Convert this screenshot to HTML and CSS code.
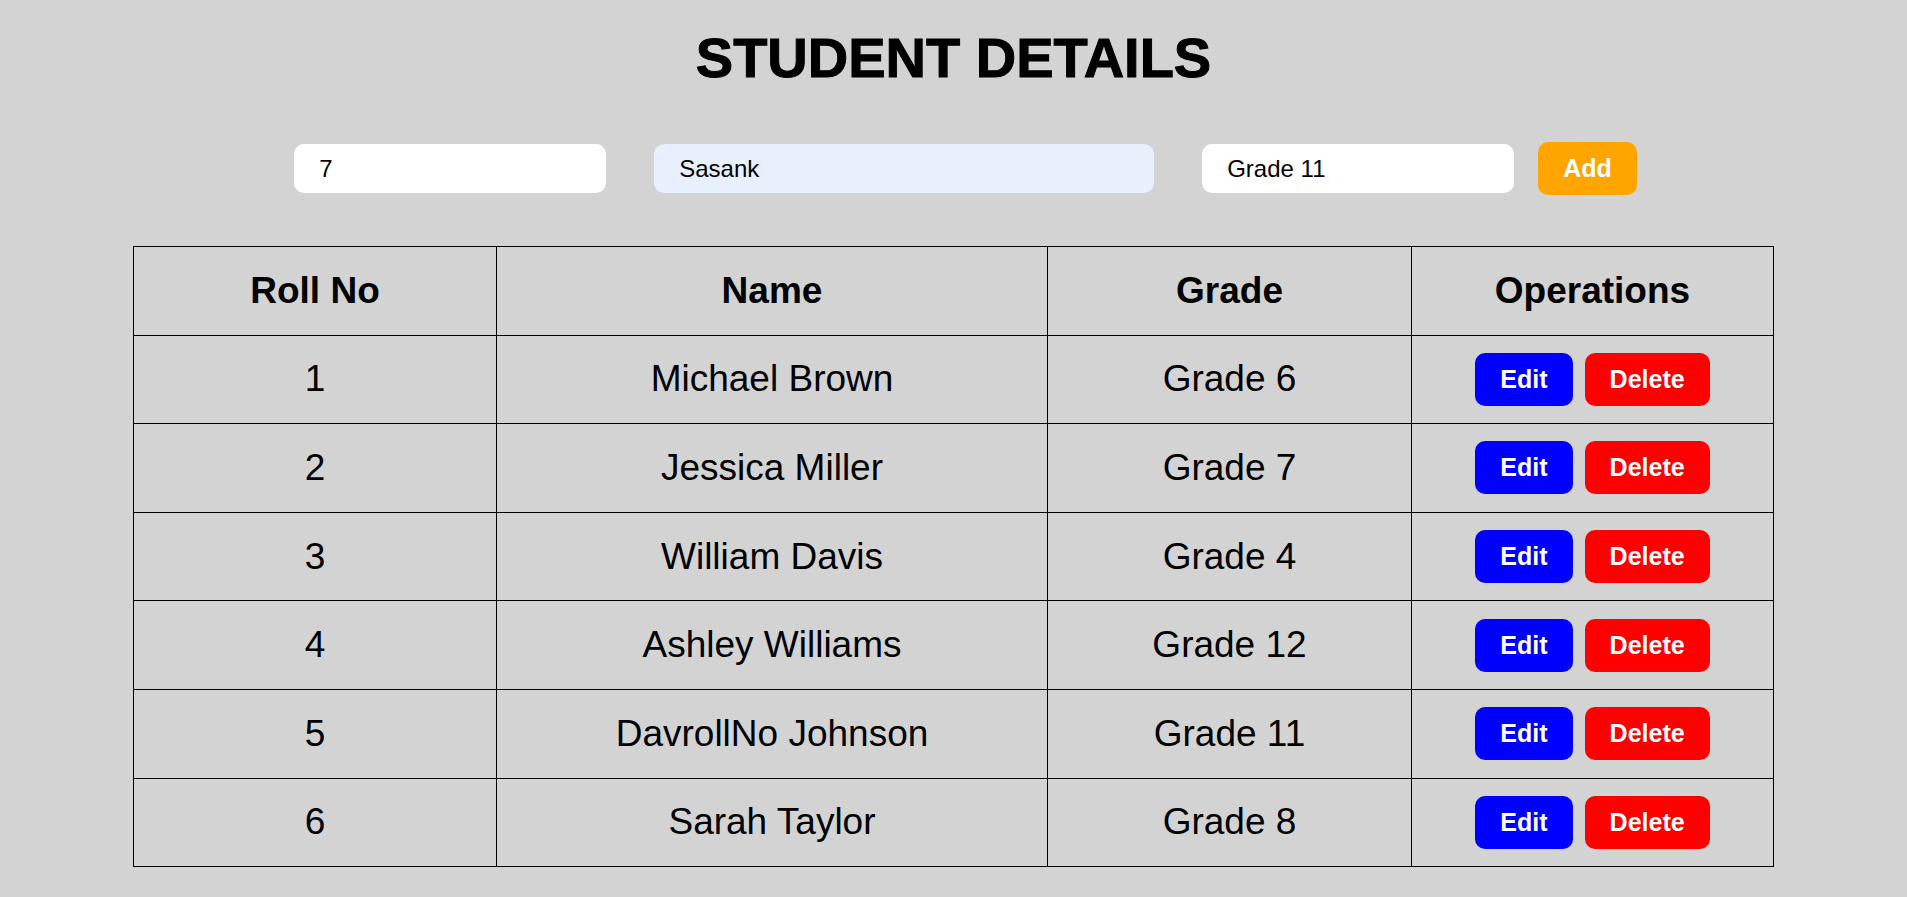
FILE: index.html
```html
<!DOCTYPE html>
<html lang="en">
<head>
<meta charset="UTF-8">
<title>Student Details</title>
<link rel="stylesheet" href="styles.css">
</head>
<body>
  <h1 class="title">STUDENT DETAILS</h1>
  <div class="form">
    <input class="field field-roll" type="text" value="7">
    <input class="field field-name autofilled" type="text" value="Sasank">
    <input class="field field-grade" type="text" value="Grade 11">
    <button class="btn btn-add">Add</button>
  </div>
  <table class="students">
    <colgroup>
      <col class="c1"><col class="c2"><col class="c3"><col class="c4">
    </colgroup>
    <thead>
      <tr><th>Roll No</th><th>Name</th><th>Grade</th><th>Operations</th></tr>
    </thead>
    <tbody>
      <tr><td>1</td><td>Michael Brown</td><td>Grade 6</td><td><div class="ops"><button class="btn btn-edit">Edit</button><button class="btn btn-delete">Delete</button></div></td></tr>
      <tr><td>2</td><td>Jessica Miller</td><td>Grade 7</td><td><div class="ops"><button class="btn btn-edit">Edit</button><button class="btn btn-delete">Delete</button></div></td></tr>
      <tr><td>3</td><td>William Davis</td><td>Grade 4</td><td><div class="ops"><button class="btn btn-edit">Edit</button><button class="btn btn-delete">Delete</button></div></td></tr>
      <tr><td>4</td><td>Ashley Williams</td><td>Grade 12</td><td><div class="ops"><button class="btn btn-edit">Edit</button><button class="btn btn-delete">Delete</button></div></td></tr>
      <tr><td>5</td><td>DavrollNo Johnson</td><td>Grade 11</td><td><div class="ops"><button class="btn btn-edit">Edit</button><button class="btn btn-delete">Delete</button></div></td></tr>
      <tr><td>6</td><td>Sarah Taylor</td><td>Grade 8</td><td><div class="ops"><button class="btn btn-edit">Edit</button><button class="btn btn-delete">Delete</button></div></td></tr>
    </tbody>
  </table>
</body>
</html>
```
FILE: styles.css
```css
html, body {
  margin: 0;
  padding: 0;
  background: #d3d3d3;
  font-family: "Liberation Sans", Arial, sans-serif;
  color: #000;
}

.title {
  margin: 25px 0 0;
  text-align: center;
  font-size: 56px;
  font-weight: 900;
  line-height: normal;
  -webkit-text-stroke: 1px #000;
}

.form {
  display: flex;
  justify-content: center;
  align-items: center;
  margin-top: 52px;
}

.field {
  box-sizing: border-box;
  height: 49px;
  margin: 0 24px;
  padding: 0 25px;
  border: none;
  border-radius: 10px;
  background: #fff;
  font-family: "Liberation Sans", Arial, sans-serif;
  font-size: 24px;
  color: #000;
  outline: none;
}

.field-roll, .field-grade { width: 312px; }
.field-name { width: 500px; }
.autofilled { background: #e8f0fe; }

.btn {
  border: none;
  border-radius: 10px;
  padding: 12px 25px;
  font-family: "Liberation Sans", Arial, sans-serif;
  font-size: 25px;
  font-weight: bold;
  color: #fff;
  line-height: normal;
  cursor: pointer;
}

.btn-add { background: #ffa500; height: 53px; }
.btn-edit { background: #0000ff; }
.btn-delete { background: #ff0000; }

.students {
  width: 1640px;
  margin: 51px auto 0;
  border-collapse: collapse;
  font-size: 37px;
  table-layout: fixed;
}

.c1 { width: 363px; }
.c2 { width: 551px; }
.c3 { width: 364px; }
.c4 { width: 362px; }

.students th,
.students td {
  border: 1px solid #000;
  text-align: center;
  padding: 0;
  height: 87.6px;
}

.students th { font-weight: bold; }
.students td { font-weight: normal; }

.ops {
  display: flex;
  justify-content: center;
  gap: 12px;
}
```
